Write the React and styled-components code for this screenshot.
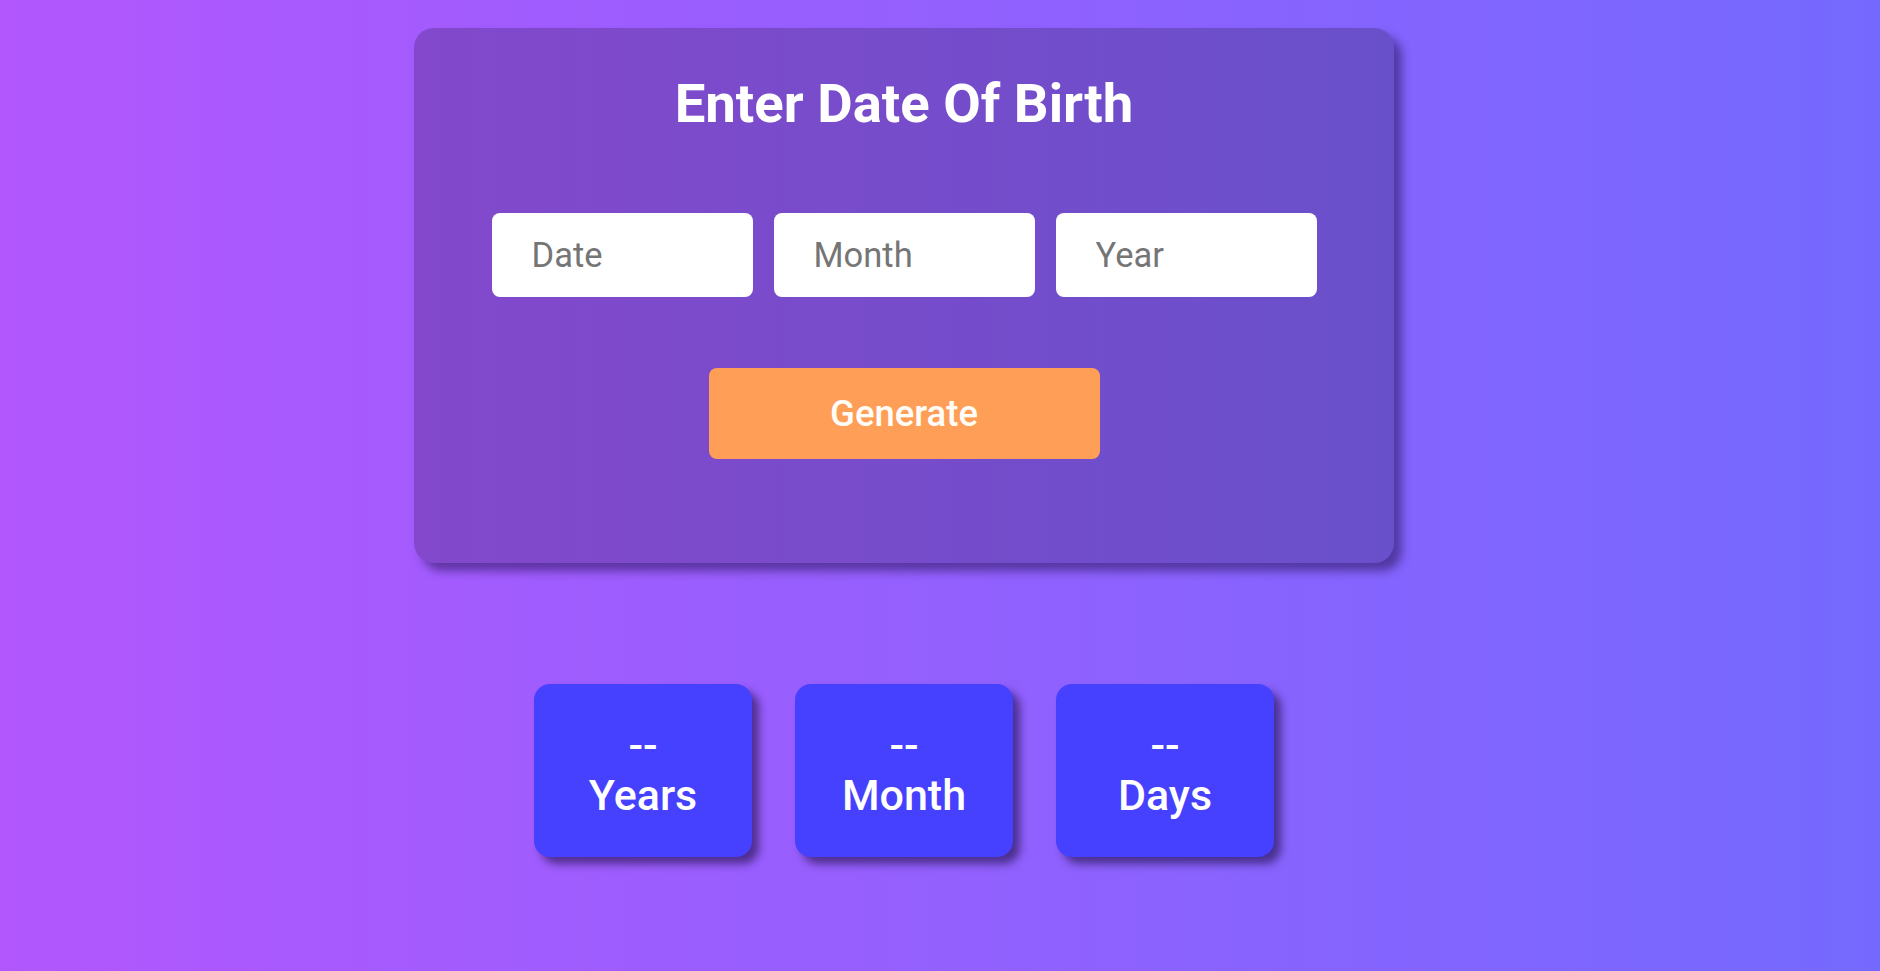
import React from "react";
import styled, { createGlobalStyle } from "styled-components";

const GlobalStyle = createGlobalStyle`
  html, body {
    margin: 0;
    padding: 0;
  }
  body {
    min-height: 100vh;
    font-family: Roboto, "Liberation Sans", sans-serif;
    background: linear-gradient(to right, #b257fe, #7469fe);
  }
  * { box-sizing: border-box; }
`;

const Page = styled.main`
  min-height: 100vh;
  display: flex;
  flex-direction: column;
  align-items: center;
  padding: 28px 72px 0 0;
`;

const Card = styled.section`
  width: 980px;
  height: 535px;
  border-radius: 20px;
  background: rgba(0, 0, 0, 0.2);
  box-shadow: 8px 8px 10px rgba(40, 20, 90, 0.55);
  display: flex;
  flex-direction: column;
  align-items: center;
  padding-top: 43px;
`;

const Title = styled.h1`
  margin: 0;
  font-size: 54.5px;
  font-weight: 700;
  color: #ffffff;
  line-height: normal;
`;

const InputRow = styled.div`
  display: flex;
  gap: 21px;
  margin-top: 78px;
`;

const Field = styled.input`
  width: 261px;
  height: 84px;
  border: none;
  border-radius: 8px;
  background: #ffffff;
  padding: 0 0 0 40px;
  font-family: Roboto, "Liberation Sans", sans-serif;
  font-size: 34.5px;
  color: #333;
  outline: none;
  &::placeholder {
    color: #757575;
  }
`;

const GenerateButton = styled.button`
  margin-top: 71px;
  width: 391px;
  height: 91px;
  border: none;
  border-radius: 8px;
  background: #ff9e57;
  color: #fffdf8;
  font-family: Roboto, "Liberation Sans", sans-serif;
  font-size: 36.5px;
  font-weight: 500;
  cursor: pointer;
`;

const Results = styled.div`
  display: flex;
  gap: 43px;
  margin-top: 121px;
`;

const ResultBox = styled.div`
  width: 218px;
  height: 173px;
  border-radius: 16px;
  background: #4640ff;
  box-shadow: 7px 7px 9px rgba(30, 15, 70, 0.6);
  display: flex;
  flex-direction: column;
  align-items: center;
  justify-content: center;
  color: #ffffff;
  font-size: 43px;
  font-weight: 500;
  line-height: 1.16;
`;

const Value = styled.span``;
const Label = styled.span``;

const results = [
  { value: "--", label: "Years" },
  { value: "--", label: "Month" },
  { value: "--", label: "Days" },
];

export default function App() {
  return (
    <>
      <GlobalStyle />
      <Page>
        <Card>
          <Title>Enter Date Of Birth</Title>
          <InputRow>
            <Field type="text" placeholder="Date" />
            <Field type="text" placeholder="Month" />
            <Field type="text" placeholder="Year" />
          </InputRow>
          <GenerateButton>Generate</GenerateButton>
        </Card>
        <Results>
          {results.map((r) => (
            <ResultBox key={r.label}>
              <Value>{r.value}</Value>
              <Label>{r.label}</Label>
            </ResultBox>
          ))}
        </Results>
      </Page>
    </>
  );
}
